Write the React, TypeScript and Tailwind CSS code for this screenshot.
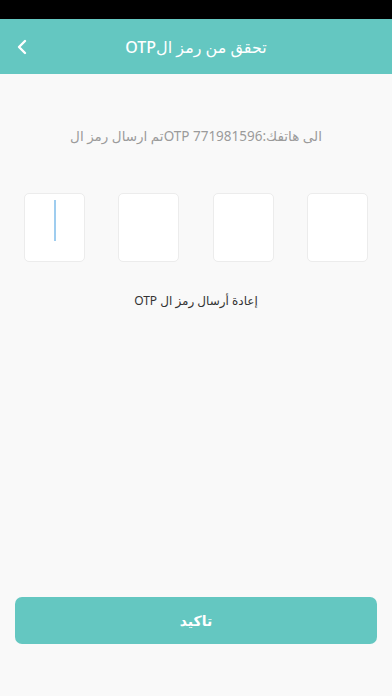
import { ChevronLeft } from 'lucide-react';

const font = { fontFamily: '"Noto Sans", "DejaVu Sans", sans-serif' };

function OtpBox({ active }: { active?: boolean }) {
  return (
    <div className="flex h-[69px] w-[61px] items-start justify-center rounded-[5px] border border-[#ececec] bg-white pt-[6px]">
      {active && <span className="h-[41px] w-[2px] bg-[#9fcdef]" />}
    </div>
  );
}

export default function App() {
  return (
    <div
      className="flex h-[696px] w-[392px] flex-col bg-[#f9f9f9]"
      style={font}
    >
      {/* status bar */}
      <div className="h-[19px] bg-black" />

      {/* header */}
      <header className="relative flex h-[55px] items-center justify-center bg-[#64c7c1]">
        <button className="absolute left-[10px] top-1/2 -translate-y-1/2 text-white">
          <ChevronLeft className="size-[24px]" strokeWidth={2.4} />
        </button>
        <h1 className="text-[16px] font-medium text-white">
          OTPتحقق من رمز ال
        </h1>
      </header>

      <main className="flex flex-1 flex-col items-center">
        <p dir="rtl" className="mt-[52px] text-[13.5px] text-[#9b9b9b]">
          الى هاتفك:771981596 OTPتم ارسال رمز ال
        </p>

        <div className="mt-[47px] flex w-full justify-between px-[24px]">
          <OtpBox active />
          <OtpBox />
          <OtpBox />
          <OtpBox />
        </div>

        <p dir="rtl" className="mt-[30px] text-[12px] text-[#333]">
          إعادة أرسال رمز ال OTP
        </p>

        <div className="flex-1" />

        <div className="w-full px-[15px] pb-[52px]">
          <button className="flex h-[47px] w-full items-center justify-center rounded-[7px] bg-[#64c7c1] text-[14px] font-bold text-white">
            تاكيد
          </button>
        </div>
      </main>
    </div>
  );
}
